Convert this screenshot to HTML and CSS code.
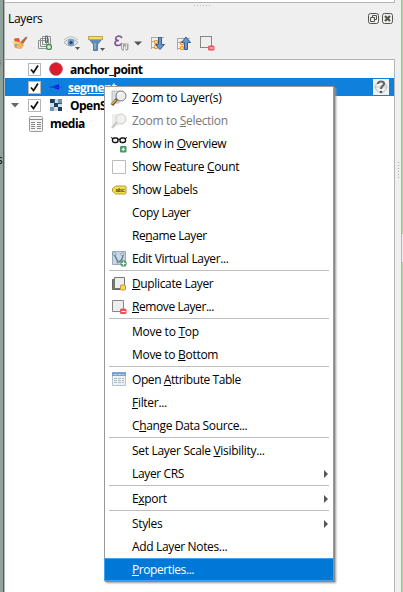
FILE: index.html
```
<!DOCTYPE html>
<html lang="en">
<head>
<meta charset="utf-8">
<title>Layers</title>
<link rel="stylesheet" href="styles.css">
</head>
<body>
<div class="window">
  <div class="canvas-left"><span class="map-label top">s</span><span class="map-label">s</span></div>
  <main class="panel">
    <div class="upper-dock"></div>
    <header class="header">
      <div class="grip"></div>
      <div class="title-row">
        <h1>Layers</h1>
        <svg class="dock-btn" width="11" height="11" viewBox="0 0 11 11" fill="none" stroke="#555550"><rect x=".5" y=".5" width="10" height="10" rx="2"/><path d="M4.500 4.500v-2h4v4h-2M2.500 4.500h4v4h-4z"/></svg>
        <svg class="dock-btn" width="11" height="11" viewBox="0 0 11 11" fill="none" stroke="#555550"><rect x=".5" y=".5" width="10" height="10" rx="2"/><path d="M3 3l5 5M8 3l-5 5" stroke-width="2.200"/></svg>
      </div>
      <div class="toolbar">
        <svg class="t-style" width="16" height="16" viewBox="0 0 16 16"><path d="M2 3.500l5-.5 1 4-5 1z" fill="#ea5146"/><path d="M0 6.500l5 0 3 2.500-5 2z" fill="#f5dc52"/><path d="M2 9.500l3-1 1 3-3 0z" fill="#77a5dc"/><path d="M8 6.500l4 3.500-3 4-6-1-1-2q4 0 6-4.500z" fill="#f0a548"/><path d="M5 11l3 2M7 9l3.500 3" stroke="#fbd685"/><path d="M8.500 7l5.500-5.500 1.500 1-4.500 6.500z" fill="#ad6844"/></svg>
        <svg class="t-group" width="16" height="17" viewBox="0 0 16 17" fill="none" stroke="#8b9490"><path d="M.5 5.500h8v8h-8z"/><path d="M2.500 3.500h8v8h-8z"/><path d="M4.500 1.500h8v8h-8z"/><path d="M7.500 8v-7h2v7" stroke="#416f92"/><rect x="8.500" y="9.500" width="5" height="5" rx="1" fill="#65a66d" stroke="#448b52"/><path d="M11 10v4M9 12h4" stroke="#fff"/></svg>
        <svg class="t-eye" width="17" height="16" viewBox="0 0 17 16"><path d="M1 7.500q6.500-7 14 0q-7 7-14 0" fill="#f3f5f6" stroke="#a1a8ac"/><path d="M1 5q6.500-6.500 14 0" fill="none" stroke="#b4b9bb"/><circle cx="8" cy="7.500" r="3.500" fill="#749bc6"/><circle cx="8" cy="7.500" r="1.600" fill="#284363"/><path d="M12 12h5l-2.500 3z" fill="#555"/></svg>
        <svg class="t-filter" width="17" height="17" viewBox="0 0 17 17"><path d="M1 4h13L9.500 9.500v6h-4v-6z" fill="#6189b9" stroke="#426b99" stroke-width=".8"/><path d="M7 8v6" stroke="#a8c6e4"/><rect x=".5" y="1.500" width="14" height="3" fill="#f4df50" stroke="#b7ab4b"/><path d="M12 13h5l-2.500 3z" fill="#555"/></svg>
        <svg class="t-expr" width="15" height="17" viewBox="0 0 15 17" fill="none"><path d="M8 3Q6.500.8 4 1.200Q1 2 2 4.500Q2.500 5.500 5 5.500Q1 5.500 1 8Q1 10.500 4 10.500Q7 10.500 8 8" stroke="#80578e" stroke-width="1.700"/><path d="M7 8.500h7.500v5l-1 2h-2v-4h-1.500v4h-2l-1-2z" fill="#a5a5a5"/><path d="M8.500 9v5M12.500 9v5" stroke="#e6e6e6"/></svg>
        <svg class="t-drop" width="8" height="5" viewBox="0 0 8 5"><path d="M0 .5h8l-4 4z" fill="#555"/></svg>
        <svg class="t-expand" width="16" height="15" viewBox="0 0 16 15" fill="none"><path d="M1.500 2v11M1 1.500h13M2 5.500h3M2 11.500h3" stroke="#a9a9a9"/><path d="M4.500 4.500h3v3h-3zM4.500 9.500h3v3h-3z" fill="#ffe2a3" stroke="#f2942e"/><path d="M8.500 1.500h3v7h3L10 13.500 5.500 8.500h3z" fill="#6d94c4" stroke="#355f91"/></svg>
        <svg class="t-collapse" width="16" height="15" viewBox="0 0 16 15" fill="none"><path d="M1.500 3v11M1 2.500h13M2 6.500h3M2 12.500h3" stroke="#a9a9a9"/><path d="M4.500 5.500h3v3h-3zM4.500 10.500h3v3h-3z" fill="#ffe2a3" stroke="#f2942e"/><path d="M8.500 13.500h3v-7h3L10 1 5.500 6.500h3z" fill="#6d94c4" stroke="#355f91"/></svg>
        <svg class="t-remove" width="15" height="15" viewBox="0 0 15 15"><rect x=".5" y=".5" width="11" height="11" fill="#eee" stroke="#888780"/><rect x="8" y="9.500" width="6.500" height="5" rx="1.500" fill="#ed5058"/><path d="M9.500 12h4" stroke="#fff"/></svg>
      </div>
    </header>
    <section class="tree">
      <div class="layer"><svg class="check" width="13" height="13" viewBox="0 0 13 13"><rect x=".5" y=".5" width="12" height="12" fill="#fff" stroke="#b7b7b7"/><path d="M3 6.500l2.500 3L10 2.500" fill="none" stroke="#111" stroke-width="1.700"/></svg><svg class="symbol" width="14" height="14" viewBox="0 0 14 14"><circle cx="7" cy="7" r="6.300" fill="#dc1d2b" stroke="#ba3039" stroke-width=".8"/></svg><span class="name anchor">anchor_point</span></div>
      <div class="layer selected"><svg class="check" width="13" height="13" viewBox="0 0 13 13"><rect x=".5" y=".5" width="12" height="12" fill="#fff" stroke="#b7b7b7"/><path d="M3 6.500l2.500 3L10 2.500" fill="none" stroke="#111" stroke-width="1.700"/></svg><svg class="symbol" width="14" height="14" viewBox="0 0 14 14"><path d="M2 7l8-2.700v5.400z" fill="#0713ff"/><path d="M0 7h13" stroke="#244baa"/></svg><span class="name segment">segment</span>
        <svg class="crs" width="16" height="16" viewBox="0 0 16 16"><path fill="#f2f2f2" d="M0 0h16v16H0z"/><circle cx="8" cy="8" r="5.500" fill="none" stroke="#bbb"/><path d="M1 8h14" stroke="#ccc"/><path d="M5 5q0-2.500 3-2.500t3 2.300Q11 6 9.500 7T8 10" fill="none" stroke="#666" stroke-width="2.200"/><circle cx="8" cy="13" r="1.300" fill="#555"/></svg></div>
      <div class="layer"><svg class="expander" width="8" height="5" viewBox="0 0 8 5"><path d="M0 0h8L4 4.500z" fill="#666"/></svg><svg class="check" width="13" height="13" viewBox="0 0 13 13"><rect x=".5" y=".5" width="12" height="12" fill="#fff" stroke="#b7b7b7"/><path d="M3 6.500l2.500 3L10 2.500" fill="none" stroke="#111" stroke-width="1.700"/></svg><svg class="symbol" width="14" height="14" viewBox="0 0 14 14"><path fill="#cbdeec" d="M1 1h12v12H1z"/><path fill="#243b53" d="M1 1h4v4H1zM5 5h4v4H5zM9 9h4v4H9z"/><path fill="#7194b1" d="M9 1h4v4H9zM1 9h4v4H1z"/><path fill="#3e5e7d" d="M5 1h1v4H5zM9 5h4v1H9z"/></svg><span class="name osm">OpenStreetMap</span></div>
      <div class="layer"><svg class="table-icon" width="14" height="16" viewBox="0 0 14 16"><rect x=".5" y=".5" width="13" height="15" rx="1" fill="#f5f5f5" stroke="#999"/><path d="M1 3.500h12" stroke="#888"/><path d="M2 6.500h10M2 8.500h10M2 10.500h10M2 12.500h10" stroke="#888" stroke-dasharray="4 2"/></svg><span class="name media">media</span></div>
    </section>
  </main>
  <div class="splitter"><i></i></div>
  <div class="canvas-right"></div>
</div>

<nav class="menu">
  <div class="item i1"><svg class="icon" width="16" height="16" viewBox="0 0 16 16"><path d="M1 1h7v12H1z" fill="#ddd" stroke="#bbb"/><path d="M6 9l-5 6" stroke="#645229" stroke-width="3"/><path d="M5 10l-4 4" stroke="#e6bd43" stroke-width="1.500"/><circle cx="10" cy="6" r="5" fill="#ededed" stroke="#777"/><path d="M7 5q1-3 4-2" fill="none" stroke="#fff" stroke-width="1.500"/></svg><span><u>Z</u>oom to Layer(s)</span></div>
  <div class="item disabled i2"><svg class="icon" width="16" height="16" viewBox="0 0 16 16"><path d="M1 1h7v12H1z" fill="#eee"/><path d="M6 9l-5 6" stroke="#cacac2" stroke-width="2.500"/><circle cx="10" cy="6" r="5" fill="#f2f2ed" stroke="#ccc"/></svg><span>Zoom to <u>S</u>election</span></div>
  <div class="item i3"><svg class="icon" width="17" height="17" viewBox="0 0 17 17" fill="none"><path d="M0 1.500l2 1M16 1.500l-2 1M7 3.500q1-1 2 0" stroke="#111"/><rect x="1.500" y="2" width="5.500" height="4.500" rx="2" stroke="#111" stroke-width="1.400"/><rect x="9" y="2" width="5.500" height="4.500" rx="2" stroke="#111" stroke-width="1.400"/><rect x="9" y="10" width="6.500" height="6.500" rx="1" fill="#4b9a68"/><path d="M12.250 11.500v3.500M10.500 13.250H14" stroke="#fff"/></svg><span>Show in <u>O</u>verview</span></div>
  <div class="item i4"><svg class="icon" width="15" height="15" viewBox="0 0 15 15"><path d="M1.500 1.500h13v13h-13z" fill="#fff" stroke="#bbb"/></svg><span>Show Feature <u>C</u>ount</span></div>
  <div class="item i5"><svg class="icon" width="15" height="10" viewBox="0 0 15 10"><path d="M4 1h9q1 0 1 1v6q0 1-1 1H4L.5 6.500v-3z" fill="#f2df50" stroke="#baa236"/><text x="3.400" y="7" class="abc">abc</text></svg><span>Show <u>L</u>abels</span></div>
  <div class="item i6"><span>Copy Layer</span></div>
  <div class="item i7"><span>Re<u>n</u>ame Layer</span></div>
  <div class="item i8"><svg class="icon" width="16" height="16" viewBox="0 0 16 16"><path d="M1.500.5h13v13h-13z" fill="#c9d6e4" stroke="#9aabba"/><path d="M3 3l4 8q5-1 5-8" fill="none" stroke="#54758f" stroke-width="1.200"/><path d="M2 2h3v2H2zM10 2h3v2h-3z" fill="#fff" stroke="#607d94" stroke-width=".6"/><circle cx="7" cy="11" r="1" fill="#fff" stroke="#607d94"/><circle cx="12.500" cy="12.500" r="3.200" fill="#5d9d71"/><path d="M12.500 10.500v4M10.500 12.500h4" stroke="#fff"/></svg><span>Edit Virtual Layer...</span></div>
  <hr>
  <div class="item i9"><svg class="icon" width="15" height="15" viewBox="0 0 15 15"><path d="M.5 3.500h8v10h-8z" fill="#777" stroke="#666"/><path d="M2.500 1.500h10v11h-10z" fill="#eee" stroke="#77776f"/><rect x="8.500" y="9" width="5" height="5" rx="1" fill="#f2d766" stroke="#c49c2c"/></svg><span><u>D</u>uplicate Layer</span></div>
  <div class="item i10"><svg class="icon" width="15" height="15" viewBox="0 0 15 15"><path d="M.5 1.500h11v11H.5z" fill="#eee" stroke="#888780"/><rect x="8" y="9.500" width="6.500" height="5.500" rx="1.500" fill="#ed5058"/><path d="M9.500 12.500h4" stroke="#fff"/></svg><span><u>R</u>emove Layer...</span></div>
  <hr>
  <div class="item i11"><span>Move to <u>T</u>op</span></div>
  <div class="item i12"><span>Move to <u>B</u>ottom</span></div>
  <hr>
  <div class="item i13"><svg class="icon" width="15" height="15" viewBox="0 0 15 15"><path d="M.5.5h13v13H.5z" fill="#edf2f6" stroke="#b3c5d4"/><path d="M0 0h14v4H0z" fill="#78a4d1"/><path d="M2 2.500h10" stroke="#b9d3ea" stroke-dasharray="3 1"/><path d="M2 6.500h10M2 8.500h10M2 10.500h10" stroke="#aab8c5" stroke-dasharray="3 1"/></svg><span>Open <u>A</u>ttribute Table</span></div>
  <div class="item i14"><span><u>F</u>ilter...</span></div>
  <div class="item i15"><span>C<u>h</u>ange Data Source...</span></div>
  <hr>
  <div class="item i16"><span>Set Layer Scale <u>V</u>isibility...</span></div>
  <div class="item sub i17"><span>Layer CRS</span></div>
  <hr>
  <div class="item sub i18"><span>E<u>x</u>port</span></div>
  <hr>
  <div class="item sub i19"><span>Styles</span></div>
  <div class="item i20"><span>Add Layer Notes...</span></div>
  <div class="item active i21"><span><u>P</u>roperties...</span></div>
</nav>
</body>
</html>
```
FILE: styles.css
```
* { box-sizing: border-box; }
body { margin: 0; overflow: hidden; font: 12px "Open Sans", "Noto Sans", sans-serif; color: #000; }
.window { display: flex; width: 403px; height: 592px; background: #efefef; }
.canvas-left { flex: none; width: 4px; background: #8fa39c; border-right: 1px solid #555f5b; overflow: hidden; padding-top: 55px; }
.map-label { display: block; width: 4px; height: 14px; line-height: 14px; margin-top: 84px; text-indent: -3px; }
.map-label.top { margin: 0; color: #76683d; font-size: 9px; }
.panel { width: 391px; display: flex; flex-direction: column; border-left: 1px solid #b5b5b5; }
.upper-dock { height: 3px; background: #fff; border-bottom: 1px solid #b4b4b4; border-right: 1px solid #b4b4b4; }
.header { height: 56px; background: #efefef; }
.grip { width: 17px; height: 1px; margin: 2px 0 0 189px; background: repeating-linear-gradient(90deg, #bbb 0 1px, transparent 1px 3px); }
.title-row { height: 23px; display: flex; align-items: center; gap: 3px; padding: 3px 2px 0 3px; }
h1 { margin: 0 auto 0 0; font-size: 12px; font-weight: 400; line-height: 16px; letter-spacing: -.3px; }
.dock-btn { margin-top: -1px; }
.toolbar { display: flex; align-items: center; height: 25px; padding: 3px 0 0 7px; }
.t-group { margin-left: 10px; }
.t-eye { margin-left: 9px; }
.t-filter { margin-left: 8px; }
.t-expr { margin-left: 9px; }
.t-drop { margin-left: 5px; }
.t-expand { margin-left: 8px; }
.t-collapse { margin-left: 10px; }
.t-remove { margin-left: 8px; }
.tree { flex: 1; background: #fff; border: solid #b4b4b4; border-width: 1px 1px 0 0; }
.layer { display: flex; align-items: center; height: 18px; padding-left: 23px; }
.layer:last-child { padding-left: 24px; }
.selected { background: #0f80dc; color: #fff; }
.expander { margin: 0 9px 0 -17px; }
.symbol { margin-left: 8px; }
.name { margin-left: 7px; padding-top: 2px; font-weight: 700; letter-spacing: -.52px; line-height: 18px; white-space: nowrap; }
.segment { margin-left: 5px; text-decoration: underline; }
.media { margin-left: 7px; }
.table-icon { margin-top: 1px; }
.crs { margin: 0 5px 0 auto; }
.splitter { width: 7px; height: 592px; border-right: 1px solid #b4b4b4; padding: 162px 0 0 3px; }
.splitter i { display: block; width: 1px; height: 17px; background: repeating-linear-gradient(#aaa 0 1px, transparent 1px 3px); }
.canvas-right { width: 1px; height: 592px; background: linear-gradient(#acd59d 0 234px, #eee 234px 262px, #acd59d 262px); }
.menu { position: absolute; left: 104px; top: 86px; width: 230px; height: 495px; background: #fff; box-shadow: inset 1px 1px #999, inset -1px -1px #999, 1px 1px 0 #888, 2px 2px 2px #999; }
.item { height: 23px; display: flex; align-items: center; position: relative; padding-left: 28px; white-space: nowrap; line-height: 24px; }
.item span { letter-spacing: -.35px; }
.item.i1 span, .item.i11 span { letter-spacing: -.25px; }
.item.i2 span, .item.i12 span, .item.i16 span, .item.i3 span, .item.i14 span { letter-spacing: -.3px; }
.item.i7 span, .item.i10 span, .item.i13 span, .item.i21 span { letter-spacing: -.42px; }
.item u { text-decoration: underline; text-decoration-thickness: 1px; text-underline-offset: 1px; }
.icon { position: absolute; left: 7px; top: 4px; }
.i5 .icon { top: 7px; left: 8px; }
.i9 .icon, .i10 .icon, .i13 .icon { left: 8px; }
.abc { font: 700 6px "Liberation Sans", sans-serif; letter-spacing: -.4px; fill: #554d20; }
.disabled { color: #777; }
.active { background: #0078d7; color: #fff; border: 1px solid #42a1ee; padding-left: 27px; line-height: 22px; }
.sub::after { content: ""; margin: 0 6px 0 auto; border: solid transparent; border-width: 4px 0 4px 4px; border-left-color: #555; }
hr { height: 1px; margin: 0 5px 1px; border: 0; background: #bdbdbd; }
```
